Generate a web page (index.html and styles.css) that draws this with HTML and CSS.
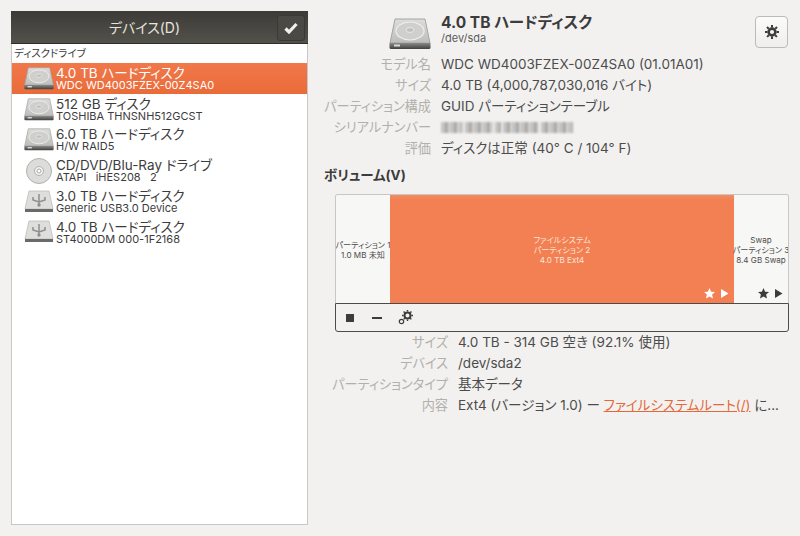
FILE: index.html
```html
<!DOCTYPE html>
<html lang="ja">
<head>
    <meta charset="UTF-8" />
    <title>ディスク</title>
    <link rel="stylesheet" href="styles.css">
</head>
<body>
    <svg class="defs" width="0" height="0">
        <defs>
            <linearGradient id="hddTop" x1="0" y1="0" x2="0" y2="1">
                <stop offset="0" stop-color="#dcdcda"/>
                <stop offset="1" stop-color="#bdbdbb"/>
            </linearGradient>
            <linearGradient id="hddFront" x1="0" y1="0" x2="0" y2="1">
                <stop offset="0" stop-color="#8a8a88"/>
                <stop offset="1" stop-color="#3f3f3d"/>
            </linearGradient>
            <symbol id="hdd" viewBox="0 0 42 32">
                <path d="M6 1h30l5 24H1z" fill="url(#hddTop)" stroke="#a5a5a3" stroke-width="1"/>
                <ellipse cx="21" cy="13" rx="14" ry="9" fill="#cfcfcd" stroke="#eeeeec" stroke-width="1.2"/>
                <ellipse cx="21" cy="12" rx="4" ry="2.4" fill="#bfbfbd" stroke="#eaeae8" stroke-width="1"/>
                <path d="M0.5 25h41v4.5q0 1.5-1.5 1.5H2q-1.5 0-1.5-1.5z" fill="url(#hddFront)"/>
                <rect x="5" y="26.5" width="6" height="2" fill="#d8d8d6"/>
            </symbol>
            <symbol id="usb" viewBox="0 0 30 24">
                <path d="M5 1h20l4 18H1z" fill="#dededc" stroke="#bdbdbb" stroke-width="0.8"/>
                <path d="M15 4v11M9 7v3l6 2 6-2V7" fill="none" stroke="#8f8f8d" stroke-width="1.5"/>
                <circle cx="15" cy="15" r="1.7" fill="#8f8f8d"/>
                <path d="M1 19h28v3H1z" fill="#6a6a68"/>
            </symbol>
            <symbol id="flags" viewBox="0 0 25 11">
                <path d="M5.5 0l1.6 3.7 4 .3-3 2.6.9 3.9-3.5-2.1L2 10.500l.9-3.900-3-2.600 4-.3z"/>
                <path d="M17 1l7.500 4.500L17 10z"/>
            </symbol>
        </defs>
    </svg>

    <aside class="sidebar">
        <header class="sidebar-head">
            <h1>デバイス(D)</h1>
            <button class="check-btn">
                <svg width="14" height="12" viewBox="0 0 14 12"><path d="M1.500 6.500l3.500 3.500 7.500-8" fill="none" stroke="#efefed" stroke-width="3.200"/></svg>
            </button>
        </header>
        <div class="group-title">ディスクドライブ</div>
        <ul class="device-list">
            <li class="device selected">
                <svg class="device-icon" width="30" height="23"><use href="#hdd"/></svg>
                <div class="device-text"><b>4.0 TB ハードディスク</b><span>WDC WD4003FZEX-00Z4SA0</span></div>
            </li>
            <li class="device">
                <svg class="device-icon" width="30" height="23"><use href="#hdd"/></svg>
                <div class="device-text"><b>512 GB ディスク</b><span>TOSHIBA THNSNH512GCST</span></div>
            </li>
            <li class="device">
                <svg class="device-icon" width="30" height="23"><use href="#hdd"/></svg>
                <div class="device-text"><b>6.0 TB ハードディスク</b><span>H/W RAID5</span></div>
            </li>
            <li class="device">
                <svg class="device-icon" width="30" height="26" viewBox="0 0 30 26">
                    <circle cx="15" cy="13" r="12.500" fill="#dcdcda" stroke="#b0b0ae"/>
                    <circle cx="15" cy="13" r="4.500" fill="#f4f4f2" stroke="#b0b0ae"/>
                    <circle cx="15" cy="13" r="2" fill="#fff" stroke="#a5a5a3"/>
                </svg>
                <div class="device-text"><b>CD/DVD/Blu-Ray ドライブ</b><span>ATAPI&nbsp;&nbsp; iHES208&nbsp;&nbsp; 2</span></div>
            </li>
            <li class="device">
                <svg class="device-icon" width="30" height="24"><use href="#usb"/></svg>
                <div class="device-text"><b>3.0 TB ハードディスク</b><span>Generic USB3.0 Device</span></div>
            </li>
            <li class="device">
                <svg class="device-icon" width="30" height="24"><use href="#usb"/></svg>
                <div class="device-text"><b>4.0 TB ハードディスク</b><span>ST4000DM 000-1F2168</span></div>
            </li>
        </ul>
    </aside>

    <main class="detail">
        <div class="disk-head">
            <svg class="disk-icon" width="42" height="32"><use href="#hdd"/></svg>
            <div class="disk-title">
                <h2>4.0 TB ハードディスク</h2>
                <p>/dev/sda</p>
            </div>
            <button class="gear-btn">
                <svg width="14" height="14" viewBox="0 0 14 14"><circle cx="7" cy="7" r="3.400" fill="none" stroke="#3c3c3c" stroke-width="2.600"/><path d="M7 0v14M0 7h14M2 2l10 10M12 2L2 12" stroke="#3c3c3c" stroke-width="2" stroke-dasharray="2.400 9.200 2.400"/></svg>
            </button>
        </div>

        <dl class="props disk-props">
            <dt>モデル名</dt><dd>WDC WD4003FZEX-00Z4SA0 (01.01A01)</dd>
            <dt>サイズ</dt><dd>4.0 TB (4,000,787,030,016 バイト)</dd>
            <dt>パーティション構成</dt><dd>GUID パーティションテーブル</dd>
            <dt>シリアルナンバー</dt>
            <dd><span class="serial"><i></i><i></i><i></i><i></i><i></i></span></dd>
            <dt>評価</dt><dd>ディスクは正常 (40° C / 104° F)</dd>
        </dl>

        <h3>ボリューム(V)</h3>

        <div class="volumes">
            <div class="partitions">
                <div class="part part-small">パーティション 1<br>1.0 MB 未知</div>
                <div class="part part-main">
                    <span>ファイルシステム<br>パーティション 2<br>4.0 TB Ext4</span>
                    <svg class="flags" width="25" height="11"><use href="#flags"/></svg>
                </div>
                <div class="part part-small">
                    <span>Swap<br>パーティション 3<br>8.4 GB Swap</span>
                    <svg class="flags" width="25" height="11"><use href="#flags"/></svg>
                </div>
            </div>
            <div class="vol-toolbar">
                <span class="stop-icon"></span>
                <span class="minus-icon"></span>
                <svg class="gears-icon" width="15" height="15" viewBox="0 0 15 15">
                    <circle cx="9.500" cy="5.500" r="3" fill="none" stroke="#3c3c3c" stroke-width="2"/>
                    <path d="M9.500 0v11M4 5.500h11M5.600 1.600l7.800 7.800M13.400 1.600L5.600 9.400" stroke="#3c3c3c" stroke-width="1.400" stroke-dasharray="1.600 7.800 1.600"/>
                    <circle cx="3.500" cy="11.500" r="2.200" fill="none" stroke="#3c3c3c" stroke-width="1.200"/>
                </svg>
            </div>
        </div>

        <dl class="props vol-props">
            <dt>サイズ</dt><dd>4.0 TB - 314 GB 空き (92.1% 使用)</dd>
            <dt>デバイス</dt><dd>/dev/sda2</dd>
            <dt>パーティションタイプ</dt><dd>基本データ</dd>
            <dt>内容</dt><dd>Ext4 (バージョン 1.0) ー <a href="#">ファイルシステムルート(/)</a> に...</dd>
        </dl>
    </main>
</body>
</html>
```

FILE: styles.css
```css
* {
    box-sizing: border-box;
    margin: 0;
    padding: 0;
}

body {
    font-family: Inter, "Noto Sans CJK JP", sans-serif;
    font-feature-settings: "palt";
    background-color: #f2f1f0;
    color: #4c4c4c;
    width: 800px;
    height: 536px;
    overflow: hidden;
    display: flex;
    padding: 11px;
    gap: 16px;
}

.defs {
    position: absolute;
}

.sidebar {
    width: 297px;
    height: 514px;
    flex: none;
    background-color: #fff;
    border: 1px solid #c8c7c5;
    border-top: none;
}

.sidebar-head {
    height: 33px;
    margin: 0 -1px;
    padding-right: 30px;
    background: linear-gradient(#3c3b37, #53514b);
    border-bottom: 1px solid #2f2e2b;
    display: flex;
    align-items: center;
    justify-content: center;
}

.sidebar-head h1 {
    font-size: 14px;
    font-weight: 400;
    color: #e6e4df;
}

.check-btn {
    position: absolute;
    left: 277px;
    top: 15px;
    width: 28px;
    height: 26px;
    background: #4b4944;
    border: 1px solid #3a3935;
    border-radius: 3px;
    display: flex;
    align-items: center;
    justify-content: center;
}

.group-title {
    height: 19px;
    padding: 3px 2px 0;
    font-size: 10.500px;
    line-height: 14px;
    color: #3c3c3c;
}

.device-list {
    list-style: none;
}

.device {
    height: 30.800px;
    display: flex;
    align-items: center;
    padding-left: 12px;
    gap: 2px;
    color: #3c3c3c;
}

.device.selected {
    background: linear-gradient(#f0784a, #ea6b3a);
    color: #fff;
}

.device-icon {
    flex: none;
}

.device-text {
    display: flex;
    flex-direction: column;
    white-space: nowrap;
}

.device-text b {
    font-size: 13.500px;
    font-weight: 400;
    line-height: 14px;
}

.device-text span {
    font-size: 11px;
    line-height: 11px;
}

.detail {
    width: 466px;
    flex: none;
}

.disk-head {
    height: 43px;
    display: flex;
}

.disk-icon {
    margin: 7px 0 0 65px;
    flex: none;
}

.disk-title {
    margin-left: 10px;
    flex: 1;
}

.disk-title h2 {
    font-size: 15.500px;
    font-weight: 700;
    line-height: 20px;
    margin-top: 2px;
    color: #3c3c3c;
}

.disk-title p {
    font-size: 11px;
    line-height: 11px;
    color: #5c5c5c;
}

.gear-btn {
    width: 33px;
    height: 32px;
    margin: 5px 2px 0 0;
    background: linear-gradient(#fbfbfa, #efeeed);
    border: 1px solid #bcbbb9;
    border-radius: 4px;
    display: flex;
    align-items: center;
    justify-content: center;
}

.props {
    display: grid;
    grid-template-columns: 107px 1fr;
    column-gap: 10px;
    font-size: 13.500px;
    line-height: 21px;
}

.props dt {
    justify-self: end;
    font-size: 13.200px;
    color: #b2b0ab;
    white-space: nowrap;
}

.props dd {
    color: #4c4c4c;
    white-space: nowrap;
}

.props a {
    color: #e4693a;
}

.serial {
    display: inline-flex;
    gap: 2px;
    height: 11px;
    vertical-align: -1px;
    filter: blur(1px);
}

.serial i {
    display: block;
    height: 100%;
    background: repeating-linear-gradient(90deg, #c4c3c1 0, #c4c3c1 4px, #a9a8a6 4px, #a9a8a6 7px, #d6d5d3 7px, #d6d5d3 9px);
}

.serial i:nth-child(1) { width: 22px; }
.serial i:nth-child(2) { width: 28px; }
.serial i:nth-child(3) { width: 6px; }
.serial i:nth-child(4) { width: 36px; }
.serial i:nth-child(5) { width: 32px; }

h3 {
    font-size: 13.500px;
    font-weight: 700;
    line-height: 18px;
    margin-top: 7px;
    color: #3c3c3c;
}

.volumes {
    margin: 10px 0 0 11px;
    width: 454px;
    border-radius: 3px;
}

.partitions {
    height: 109px;
    display: flex;
    border: 1px solid #c8c7c5;
    border-bottom: none;
    border-radius: 3px 3px 0 0;
    overflow: hidden;
}

.part {
    position: relative;
    display: flex;
    align-items: center;
    justify-content: center;
    text-align: center;
    padding-top: 1px;
    font-size: 8.100px;
    line-height: 10px;
    white-space: nowrap;
    color: #4c4c4c;
    background-color: #f7f7f6;
}

.part-small {
    width: 54px;
    flex: none;
}

.part-main {
    flex: 1;
    color: #fbe5da;
    background: linear-gradient(#f38c62 0, #f28052 5px);
}

.flags {
    position: absolute;
    right: 5px;
    bottom: 4px;
    fill: #3c3c3c;
}

.part-main .flags {
    fill: #fff;
}

.vol-toolbar {
    height: 29px;
    border: 1px solid #4c4c4c;
    border-radius: 0 0 3px 3px;
    display: flex;
    align-items: center;
    gap: 18px;
    padding-left: 10px;
}

.stop-icon {
    width: 8px;
    height: 8px;
    background-color: #3c3c3c;
}

.minus-icon {
    width: 10px;
    height: 2px;
    background-color: #3c3c3c;
}

.gears-icon {
    margin-left: -2px;
}

.vol-props {
    margin-top: 0;
    grid-template-columns: 124px 1fr;
}
```
